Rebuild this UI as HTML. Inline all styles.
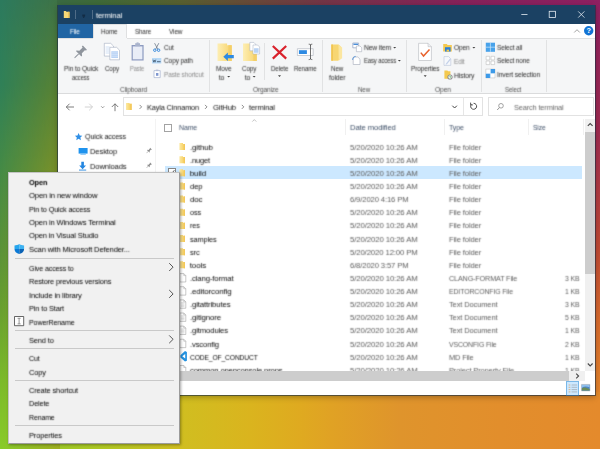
<!DOCTYPE html>
<html><head><meta charset="utf-8"><title>terminal</title>
<style>
*{box-sizing:border-box;margin:0;padding:0}
html,body{width:600px;height:449px;overflow:hidden}
body{font-family:"Liberation Sans",sans-serif;font-size:7.1px;color:#2b2b2b;position:relative;
background:#c9b921;
}
.a,.t,svg.ov{position:absolute}
.t{white-space:nowrap;line-height:10px;height:10px}
svg.ov{left:0;top:0;width:600px;height:449px;overflow:visible}
#win{position:absolute;left:58px;top:5px;width:537px;height:390px;background:#fff;box-shadow:0 2px 6px rgba(0,0,0,.30)}
#menu{position:absolute;left:8px;top:172px;width:172px;height:272px;background:#f1f1f1;border:1px solid #c4c4c4;border-right-color:#9c9c9c;border-bottom-color:#9c9c9c;box-shadow:1px 1px 2.5px rgba(0,0,0,.35)}
.ms{position:absolute;left:14.5px;width:159.5px;height:1px;background:#c9c9c9}
#bgB{position:absolute;left:0;top:390px;width:600px;height:59px;background:linear-gradient(to right,#88cc2c 0px,#aec824 100px,#d0be20 180px,#dab41e 250px,#dfaa20 300px,#e0a224 330px,#df942c 400px,#e28e2c 500px,#e48a2c 600px)}
#bgL{position:absolute;left:0;top:0;width:60px;height:449px;background:linear-gradient(to bottom,#3f7346 0px,#5a8232 85px,#7d9228 172px,#a0b020 449px)}
#bgL i{position:absolute;left:0;top:0;width:60px;height:449px;background:linear-gradient(to bottom,#2c7a5e 0px,#2f8058 85px,#448a46 170px,#5a9238 250px,#68a030 310px,#7aba2c 380px,#88cc2c 449px);-webkit-mask-image:linear-gradient(to right,#000 0px,rgba(0,0,0,.85) 9px,transparent 60px);mask-image:linear-gradient(to right,#000 0px,rgba(0,0,0,.85) 9px,transparent 60px)}
#bgT{position:absolute;left:57px;top:0;width:543px;height:8px;background:linear-gradient(to right,#3a6a42 0px,#3f6a38 43px,#586030 123px,#684a38 193px,#743646 263px,#7f2a52 343px,#87225a 403px,#8e2062 543px)}
#bgR{position:absolute;left:594px;top:0;width:6px;height:392px;background:linear-gradient(to bottom,#8e2062 0px,#a02a50 130px,#c04a34 250px,#d86a2c 320px,#e4842c 392px)}
#wt,#mt{will-change:transform;filter:url(#soft);position:absolute;left:0;top:0;width:600px;height:449px}
</style></head><body>
<svg width="0" height="0" style="position:absolute"><filter id="soft" x="0" y="0" width="100%" height="100%" color-interpolation-filters="sRGB"><feConvolveMatrix order="3" kernelMatrix="0.028 0.111 0.028 0.111 0.444 0.111 0.028 0.111 0.028" divisor="1" edgeMode="none" preserveAlpha="false"/></filter></svg>
<div id="bgB"></div><div id="bgL"><i></i></div><div id="bgT"></div><div id="bgR"></div>
<div id="win"></div>
<!-- title bar -->
<div class="a" style="left:58px;top:5px;width:537px;height:19px;background:#1b4163"></div>
<!-- tab row -->
<div class="a" style="left:58px;top:24px;width:35px;height:14px;background:#2165a4"></div>
<div class="a" style="left:93px;top:24px;width:34px;height:15px;background:#f5f6f7;border:1px solid #dfe0e1;border-bottom:none"></div>
<!-- ribbon -->
<div class="a" style="left:58px;top:38px;width:537px;height:56px;background:#f5f6f7;border-bottom:1px solid #dadbdc"></div>
<div class="a" style="left:94px;top:38px;width:32px;height:1px;background:#f5f6f7"></div>
<div class="a" style="left:58px;top:38px;width:35px;height:1px;background:#dfe0e1"></div>
<div class="a" style="left:127px;top:38px;width:468px;height:1px;background:#dfe0e1"></div>
<!-- group separators -->
<div class="a" style="left:209px;top:40px;width:1px;height:52px;background:#e1e2e3"></div>
<div class="a" style="left:322px;top:40px;width:1px;height:52px;background:#e1e2e3"></div>
<div class="a" style="left:406px;top:40px;width:1px;height:52px;background:#e1e2e3"></div>
<div class="a" style="left:481px;top:40px;width:1px;height:52px;background:#e1e2e3"></div>
<div class="a" style="left:546px;top:40px;width:1px;height:52px;background:#e1e2e3"></div>
<div class="a" style="left:264px;top:43px;width:1px;height:37px;background:#e1e2e3"></div>
<!-- address bar -->
<div class="a" style="left:123px;top:97px;width:360px;height:19px;border:1px solid #e2e2e2;background:#fff"></div>
<div class="a" style="left:463px;top:98px;width:1px;height:17px;background:#e6e6e6"></div>
<div class="a" style="left:488px;top:97px;width:106px;height:19px;border:1px solid #e2e2e2;background:#fff"></div>
<!-- column header seps -->
<div class="a" style="left:345px;top:119px;width:1px;height:16px;background:#f0f0f0"></div>
<div class="a" style="left:444px;top:119px;width:1px;height:16px;background:#f0f0f0"></div>
<div class="a" style="left:528px;top:119px;width:1px;height:16px;background:#f0f0f0"></div>
<div class="a" style="left:583px;top:119px;width:1px;height:16px;background:#f0f0f0"></div>
<!-- nav pane separator -->
<div class="a" style="left:155px;top:119px;width:1px;height:252px;background:#f3f3f3"></div>
<!-- selected row -->
<div class="a" style="left:165px;top:166px;width:417px;height:13.4px;background:#cce8ff"></div>
<!-- header checkbox + row checkbox -->
<div class="a" style="left:164px;top:123.5px;width:8px;height:8px;border:1px solid #a3a3a3;background:#fff"></div>
<div class="a" style="left:168px;top:168px;width:8px;height:8px;border:1px solid #858585;background:#fff"></div>
<!-- scrollbars -->
<div class="a" style="left:585px;top:119px;width:10px;height:262px;background:#f0f0f0"></div>
<div class="a" style="left:585px;top:132px;width:10px;height:142px;background:#cdcdcd"></div>
<div class="a" style="left:156px;top:371px;width:429px;height:10px;background:#f0f0f0"></div>
<div class="a" style="left:166px;top:371px;width:403px;height:10px;background:#cdcdcd"></div>
<!-- status bar view buttons -->
<div class="a" style="left:566px;top:381px;width:13px;height:14.5px;background:#cce8ff;border:1px solid #7ab8e8"></div>

<svg class="ov" viewBox="0 0 600 449">
<defs>
 <linearGradient id="fg" x1="0" x2="1" y1="0" y2="0"><stop offset="0" stop-color="#fce9a4"/><stop offset=".55" stop-color="#f9d978"/><stop offset="1" stop-color="#f2c655"/></linearGradient>
 <linearGradient id="fg2" x1="0" x2="1" y1="0" y2="0"><stop offset="0" stop-color="#fdeeb4"/><stop offset="1" stop-color="#f7d36a"/></linearGradient>
 <g id="sfolder"><path d="M0 0.4h3.6l0 .8h2v6.2H0z" fill="url(#fg)"/><path d="M4.4 1.2h1.2v6.2H4.4z" fill="#f3c85a"/></g>
 <g id="sfile"><path d="M0.3 0.3h4l2 2v6.4H0.3z" fill="#fff" stroke="#a2a2a2" stroke-width=".6"/><path d="M4.3.3v2h2" fill="none" stroke="#a2a2a2" stroke-width=".5"/></g>
 <g id="stxt"><path d="M0.3 0.3h4l2 2v6.4H0.3z" fill="#fff" stroke="#a2a2a2" stroke-width=".6"/><path d="M4.3.3v2h2" fill="none" stroke="#a2a2a2" stroke-width=".5"/><path d="M1.4 3.2h3.6M1.4 4.5h3.6M1.4 5.8h3.6M1.4 7.1h3.6" stroke="#bdbdbd" stroke-width=".5"/></g>
 <g id="pin"><path d="M-2.6-6.4h5.2v1.3h-1v4.2l1.9 1.6v.9h-7v-.9l1.9-1.6v-4.2h-1z"/><path d="M-.45 1.6h.9v4.6l-.45 1.2-.45-1.2z"/></g>
 <g id="chev"><path d="M0 0l2 2-2 2" fill="none" stroke="#666" stroke-width=".75"/></g>
 <g id="dd"><path d="M0 0h3l-1.5 1.7z" fill="#444"/></g>
</defs>

<!-- title bar -->
<path d="M63.8 10.9h2.1l.5.8h3.1v6.3h-5.7z" fill="#f7d877"/><path d="M68.2 11.7h1.3v6.3h-1.3z" fill="#eabf52"/>
<path d="M75.5 10v9M92.5 10v9" stroke="#5d7791" stroke-width=".8"/>
<path d="M82.3 15.2h2.8" stroke="#0c1c2e" stroke-width=".8"/><path d="M82.3 16.4h2.8l-1.4 1.4z" fill="#0c1c2e"/>
<g stroke="#e6edf4" stroke-width=".8" fill="none"><path d="M521.3 14.5h6.2"/><rect x="549.2" y="11.3" width="6.2" height="6.2"/><path d="M578.2 11.4l6.2 6.2M584.4 11.4l-6.2 6.2"/></g>
<!-- tab row right -->
<path d="M574.2 32.5l2.8-2.8 2.8 2.8" stroke="#8c8c8c" stroke-width=".8" fill="none"/>
<circle cx="588.7" cy="30.8" r="4.7" fill="#1173d4"/>
<text x="588.7" y="33.4" font-size="7.4" font-weight="bold" fill="#fff" text-anchor="middle" font-family="Liberation Sans">?</text>

<!-- RIBBON: pin -->
<g transform="translate(79.9 52.6) rotate(45)" fill="#8f959d"><use href="#pin" transform="scale(1.1)"/></g>
<!-- copy -->
<g stroke="#a3adc0" stroke-width=".6" fill="#fff">
 <path d="M104.3 43.3h6.4l2.8 2.8v10h-9.2z"/><path d="M109.8 47.3h6.8l2.9 2.9v9.6h-9.7z"/></g>
<path d="M105.6 47h4M105.6 49h4M105.6 51h4M105.6 53h4" stroke="#c4d8f3" stroke-width=".8"/>
<path d="M111.3 51.2h6.7v6.8h-6.7z" fill="#b9d3f5"/><path d="M111.3 52.9h6.7M111.3 54.6h6.7M111.3 56.3h6.7" stroke="#e5effc" stroke-width=".5"/>
<!-- paste -->
<path d="M131.6 45h12v15.5h-12z" fill="#8d9bc0"/><path d="M132.8 46.4h9.6v12.9h-9.6z" fill="#e9edf7"/>
<path d="M135.2 43.2h4.8v3h-4.8z" fill="#a9b3cc"/><path d="M136.6 42.4h2v1.4h-2z" fill="#a9b3cc"/>
<!-- cut -->
<path d="M154.6 43.2l3.3 6.2M158.8 43.2l-3.3 6.2" stroke="#6d7b8c" stroke-width=".8" fill="none"/>
<circle cx="154.8" cy="50.2" r="1.25" fill="none" stroke="#2b82d9" stroke-width=".9"/><circle cx="158.6" cy="50.2" r="1.25" fill="none" stroke="#2b82d9" stroke-width=".9"/>
<!-- copy path -->
<path d="M152 58h9.3v5.5H152z" fill="#b8d9f6"/><path d="M153 59.6l.7 2.6.7-2 .7 2 .7-2.6" stroke="#25384f" stroke-width=".55" fill="none"/><path d="M157 61.7h3.6" stroke="#25384f" stroke-width=".7"/>
<!-- paste shortcut -->
<path d="M154 70.6h6.2v7H154z" fill="#fff" stroke="#a5b2d0" stroke-width=".7"/><path d="M155.8 69.6h2.6v1.5h-2.6z" fill="#b7c1d9"/><path d="M156 73h2.4v2.8H156z" fill="#7f97d0"/>
<!-- move to -->
<path d="M217.5 43.6h9.6v1.6h4.6V61h-14.2z" fill="url(#fg2)"/><path d="M228.4 45.2h3.3V61h-3.3z" fill="#f4cf68"/>
<path d="M223.3 56.7l4.6-4.3v2.7h5.9v3.2h-5.9V61z" fill="#2d8ae2"/>
<!-- copy to -->
<path d="M243 43.6h9.6v1.6h4.1V61H243z" fill="url(#fg2)"/><path d="M253.4 45.2h3.3V61h-3.3z" fill="#f4cf68"/>
<g stroke="#a3adc0" stroke-width=".5" fill="#fff"><path d="M249.8 42.4h4l1.8 1.8v6.6h-5.8z"/><path d="M253 45h4.6l2 2v7H253z"/></g>
<path d="M254 48.2h4.6v4.6H254z" fill="#b9d3f5"/>
<!-- delete -->
<path d="M272.8 46l13.4 12.6M286.2 46l-13.4 12.6" stroke="#d9222c" stroke-width="2.2" fill="none"/>
<!-- rename -->
<path d="M297.4 48.7h15.8v6.8h-15.8z" fill="#fff" stroke="#a9b0ba" stroke-width=".6"/><path d="M298.9 50.2h8v3.8h-8z" fill="#2d8ae2"/>
<path d="M310.5 44.6v14.6M308.7 44.2c1 0 1.8.3 1.8 1 0-.7.8-1 1.8-1M308.7 59.6c1 0 1.8-.3 1.8-1 0 .7.8 1 1.8 1" stroke="#4a4a4a" stroke-width=".8" fill="none"/>
<!-- new folder -->
<path d="M331.3 44.4h7.2l2.2 2v12l-2.6 2.3h-6.8z" fill="#f7d672"/><path d="M338.5 44.4l3.6 3.2v10.6l-3.4 2.5z" fill="#fbe6a0"/><path d="M331.3 44.4h1.6v16.3h-1.6z" fill="#f0c350"/>
<!-- new item -->
<path d="M352.8 43h5.8v4.8h-5.8z" fill="#fff" stroke="#7f94b8" stroke-width=".6"/><path d="M353.4 43.6h4.6v1.4h-4.6z" fill="#4d8fd8"/>
<path d="M356.4 46h3.6l1.7 1.7v4h-5.3z" fill="#fff" stroke="#a3a9b8" stroke-width=".55"/>
<!-- easy access -->
<path d="M353.2 57h4.6l2.2 2.2v5.3h-6.8z" fill="#fff" stroke="#a3a9b8" stroke-width=".6"/><path d="M352.6 59.8c.2-1.8 1.2-3 3-3.4" stroke="#3c87d8" stroke-width=".9" fill="none"/>
<!-- properties -->
<path d="M418.6 43.3h9.4l3.4 3.4v13.8h-12.8z" fill="#fff" stroke="#b4b7bc" stroke-width=".6"/><path d="M428 43.3v3.4h3.4" fill="#eceef1" stroke="#b4b7bc" stroke-width=".5"/>
<path d="M420.8 52.6l2.7 3.4 6-6.6" stroke="#e8622d" stroke-width="1.5" fill="none"/>
<!-- open -->
<path d="M443.2 44h3.6l.8 1h4.2v6.6h-8.6z" fill="#f4c94f"/><path d="M445 47.2h5.6v4.4H445z" fill="#2c7fd6"/><path d="M446.6 49.6h2.4v2h-2.4z" fill="#f4c94f"/>
<!-- edit -->
<path d="M444 56.6h4.6l2.2 2.2v6.6H444z" fill="#f6f8fb" stroke="#b9c4d8" stroke-width=".6"/><path d="M446 63.4l4-5 1 .8-4 5-1.4.5z" fill="#c4d2ea"/>
<!-- history -->
<path d="M444.4 70.4h3l.7.9h2.3v7.4h-6z" fill="#f4c94f"/><circle cx="450" cy="77" r="2.6" fill="#8c8c8c"/><circle cx="450" cy="77" r="1.7" fill="#eef7ee"/><path d="M450 75.8v1.3h1" stroke="#2c9a3c" stroke-width=".55" fill="none"/>
<!-- select all -->
<path d="M485.8 42.7h9.2v9.1h-9.2z" fill="#48a2ea"/><path d="M490.4 42.7v9.1M485.8 47.2h9.2" stroke="#cfe7fb" stroke-width=".7"/>
<!-- select none -->
<g fill="#fff" stroke="#b9b9b9" stroke-width=".55"><path d="M486.1 56.3h3.6v3.6h-3.6zM491 56.3h3.6v3.6H491zM486.1 61h3.6v3.6h-3.6zM491 61h3.6v3.6H491z"/></g>
<!-- invert selection -->
<path d="M485.8 69.1h9.2v8.8h-9.2z" fill="#fff" stroke="#b9b9b9" stroke-width=".5"/><path d="M490.4 69.1h4.6v4.4h-4.6zM485.8 73.5h4.6v4.4h-4.6z" fill="#3d9ae8"/><path d="M490.4 69.1v8.8M485.8 73.5h9.2" stroke="#d6e9fa" stroke-width=".6"/>
<!-- drop-down arrows in ribbon -->
<use href="#dd" x="227.2" y="75.9"/><use href="#dd" x="252.6" y="75.9"/><use href="#dd" x="278" y="75.3"/><use href="#dd" x="423.7" y="75.3"/>
<use href="#dd" x="393.2" y="46.9"/><use href="#dd" x="397.9" y="59.9"/><use href="#dd" x="472.4" y="46.9"/>

<!-- ADDRESS BAR -->
<g stroke="#5e5e5e" stroke-width=".8" fill="none"><path d="M66.3 107h7.7M69.6 103.7l-3.3 3.3 3.3 3.3"/><path d="M115 103.8v7.4M111.8 107l3.2-3.2 3.2 3.2"/></g>
<g stroke="#c6c6c6" stroke-width=".8" fill="none"><path d="M84.8 107h7.7M89.2 103.7l3.3 3.3-3.3 3.3"/></g>
<path d="M101.2 106.3l1.5 1.5 1.5-1.5" stroke="#6a6a6a" stroke-width=".7" fill="none"/>
<use href="#sfolder" x="126" y="102.6"/>
<use href="#chev" x="139.6" y="104.9"/><use href="#chev" x="205" y="104.9"/><use href="#chev" x="241.8" y="104.9"/>
<path d="M452.3 105.7l2.3 2.3 2.3-2.3" stroke="#444" stroke-width="1" fill="none"/>
<path d="M471.4 104.3a3 3 0 1 0 2.2-1" stroke="#444" stroke-width=".95" fill="none"/><path d="M470.6 102.6v2.3h2.3" stroke="#444" stroke-width=".9" fill="none"/>
<circle cx="501" cy="105.8" r="2.3" stroke="#7d7d7d" stroke-width=".7" fill="none"/><path d="M499.4 107.6l-2.2 2.4" stroke="#7d7d7d" stroke-width=".8"/>
<!-- sort arrow -->
<path d="M252.3 121.6l2-2 2 2" stroke="#9a9a9a" stroke-width=".6" fill="none"/>

<!-- NAV PANE -->
<path d="M78.6 133l1.1 2.4 2.6.33-1.9 1.8.5 2.6-2.3-1.28-2.3 1.28.5-2.6-1.9-1.8 2.6-.33z" fill="#2f8fe6"/>
<path d="M78.6 148h9v5.6h-9z" fill="#1f93ee"/><path d="M80.4 154.2h5.4v.7h-5.4z" fill="#6db7f2"/>
<path d="M81.3 161.8h2.6v3.8h2.1l-3.4 3.6-3.4-3.6h2.1z" fill="#2386e0"/><path d="M79 169.6h7.2v.9H79z" fill="#2386e0"/>
<g fill="#8e8e8e"><g transform="translate(148.8 150.8) rotate(45) scale(.48)"><use href="#pin"/></g><g transform="translate(148.8 165.6) rotate(45) scale(.48)"><use href="#pin"/></g></g>
<!-- selected row check -->
<path d="M169.8 172l1.6 1.8 3-3.6" stroke="#333" stroke-width=".8" fill="none"/>
<use href="#sfolder" x="179.4" y="142.70"/>
<use href="#sfolder" x="179.4" y="155.83"/>
<use href="#sfolder" x="179.4" y="168.96"/>
<use href="#sfolder" x="179.4" y="182.09"/>
<use href="#sfolder" x="179.4" y="195.22"/>
<use href="#sfolder" x="179.4" y="208.35"/>
<use href="#sfolder" x="179.4" y="221.48"/>
<use href="#sfolder" x="179.4" y="234.61"/>
<use href="#sfolder" x="179.4" y="247.74"/>
<use href="#sfolder" x="179.4" y="260.87"/>
<use href="#sfile" x="179.5" y="273.30"/>
<use href="#sfile" x="179.5" y="286.43"/>
<use href="#stxt" x="179.5" y="299.56"/>
<use href="#stxt" x="179.5" y="312.69"/>
<use href="#stxt" x="179.5" y="325.82"/>
<use href="#sfile" x="179.5" y="338.95"/>
<path d="M186.9 351.88v8.8l-1.9.9-4.6-4.2v-2.2l4.6-4.2zM185.2 354.08l-2.9 2.2 2.9 2.2z" fill="#2492e0" fill-rule="evenodd"/>
<use href="#sfile" x="179.5" y="365.21"/>
<!-- scrollbar arrows -->
<g stroke="#4a4a4a" stroke-width="1.1" fill="none"><path d="M587.8 125.9l2.4-2.4 2.4 2.4"/><path d="M587.8 363.5l2.4 2.4 2.4-2.4"/></g>
</svg>

<div id="wt">
<div class="t" style="left:95.80px;top:10.90px;font-size:8.0px;transform:scaleX(0.961);transform-origin:0 50%;color:#fff;letter-spacing:-0.150px;">terminal</div>
<div class="t" style="left:70.30px;top:26.90px;font-size:7.0px;transform:scaleX(0.917);transform-origin:0 50%;color:#fff;letter-spacing:-0.150px;">File</div>
<div class="t" style="left:101.00px;top:26.90px;font-size:7.0px;transform:scaleX(0.912);transform-origin:0 50%;letter-spacing:-0.150px;">Home</div>
<div class="t" style="left:135.30px;top:26.90px;font-size:7.0px;transform:scaleX(0.892);transform-origin:0 50%;letter-spacing:-0.150px;">Share</div>
<div class="t" style="left:168.60px;top:26.90px;font-size:7.0px;transform:scaleX(0.928);transform-origin:0 50%;letter-spacing:-0.150px;">View</div>
<div class="t" style="left:63.70px;top:64.00px;font-size:7.0px;transform:scaleX(0.954);transform-origin:0 50%;color:#2a2a2a;letter-spacing:-0.150px;">Pin to Quick</div>
<div class="t" style="left:71.70px;top:72.70px;font-size:7.0px;transform:scaleX(0.828);transform-origin:0 50%;color:#2a2a2a;letter-spacing:-0.150px;">access</div>
<div class="t" style="left:104.70px;top:64.00px;font-size:7.0px;transform:scaleX(0.889);transform-origin:0 50%;color:#2a2a2a;letter-spacing:-0.150px;">Copy</div>
<div class="t" style="left:130.00px;top:64.00px;font-size:7.0px;transform:scaleX(0.816);transform-origin:0 50%;color:#8a8a8a;letter-spacing:-0.150px;">Paste</div>
<div class="t" style="left:163.70px;top:43.40px;font-size:7.0px;transform:scaleX(0.918);transform-origin:0 50%;color:#2a2a2a;letter-spacing:-0.150px;">Cut</div>
<div class="t" style="left:163.70px;top:56.40px;font-size:7.0px;transform:scaleX(0.942);transform-origin:0 50%;color:#2a2a2a;letter-spacing:-0.150px;">Copy path</div>
<div class="t" style="left:163.70px;top:69.50px;font-size:7.0px;transform:scaleX(0.928);transform-origin:0 50%;color:#8a8a8a;letter-spacing:-0.150px;">Paste shortcut</div>
<div class="t" style="left:120.00px;top:84.70px;font-size:7.0px;transform:scaleX(0.943);transform-origin:0 50%;color:#505050;letter-spacing:-0.150px;">Clipboard</div>
<div class="t" style="left:216.20px;top:64.00px;font-size:7.0px;transform:scaleX(0.938);transform-origin:0 50%;color:#2a2a2a;letter-spacing:-0.150px;">Move</div>
<div class="t" style="left:218.80px;top:72.50px;font-size:7.0px;color:#2a2a2a;letter-spacing:-0.122px;">to</div>
<div class="t" style="left:242.00px;top:64.00px;font-size:7.0px;transform:scaleX(0.908);transform-origin:0 50%;color:#2a2a2a;letter-spacing:-0.150px;">Copy</div>
<div class="t" style="left:244.70px;top:72.50px;font-size:7.0px;color:#2a2a2a;letter-spacing:-0.122px;">to</div>
<div class="t" style="left:270.80px;top:64.00px;font-size:7.0px;transform:scaleX(0.890);transform-origin:0 50%;color:#2a2a2a;letter-spacing:-0.150px;">Delete</div>
<div class="t" style="left:294.20px;top:64.00px;font-size:7.0px;transform:scaleX(0.880);transform-origin:0 50%;color:#2a2a2a;letter-spacing:-0.150px;">Rename</div>
<div class="t" style="left:252.50px;top:84.70px;font-size:7.0px;transform:scaleX(0.937);transform-origin:0 50%;color:#505050;letter-spacing:-0.150px;">Organize</div>
<div class="t" style="left:331.20px;top:64.00px;font-size:7.0px;transform:scaleX(0.892);transform-origin:0 50%;color:#2a2a2a;letter-spacing:-0.150px;">New</div>
<div class="t" style="left:329.20px;top:72.50px;font-size:7.0px;transform:scaleX(0.981);transform-origin:0 50%;color:#2a2a2a;letter-spacing:-0.150px;">folder</div>
<div class="t" style="left:363.80px;top:43.40px;font-size:7.0px;transform:scaleX(0.965);transform-origin:0 50%;color:#2a2a2a;letter-spacing:-0.150px;">New item</div>
<div class="t" style="left:363.80px;top:56.40px;font-size:7.0px;transform:scaleX(0.850);transform-origin:0 50%;color:#2a2a2a;letter-spacing:-0.150px;">Easy access</div>
<div class="t" style="left:358.00px;top:84.70px;font-size:7.0px;transform:scaleX(0.885);transform-origin:0 50%;color:#505050;letter-spacing:-0.150px;">New</div>
<div class="t" style="left:410.80px;top:64.00px;font-size:7.0px;transform:scaleX(0.934);transform-origin:0 50%;color:#2a2a2a;letter-spacing:-0.150px;">Properties</div>
<div class="t" style="left:454.20px;top:43.40px;font-size:7.0px;transform:scaleX(0.938);transform-origin:0 50%;color:#2a2a2a;letter-spacing:-0.150px;">Open</div>
<div class="t" style="left:454.20px;top:56.70px;font-size:7.0px;transform:scaleX(0.916);transform-origin:0 50%;color:#8a8a8a;letter-spacing:-0.150px;">Edit</div>
<div class="t" style="left:454.20px;top:70.50px;font-size:7.0px;transform:scaleX(0.979);transform-origin:0 50%;color:#2a2a2a;letter-spacing:-0.150px;">History</div>
<div class="t" style="left:435.00px;top:84.70px;font-size:7.0px;transform:scaleX(0.956);transform-origin:0 50%;color:#505050;letter-spacing:-0.150px;">Open</div>
<div class="t" style="left:497.00px;top:43.40px;font-size:7.0px;transform:scaleX(0.937);transform-origin:0 50%;color:#2a2a2a;letter-spacing:-0.150px;">Select all</div>
<div class="t" style="left:497.00px;top:56.40px;font-size:7.0px;transform:scaleX(0.925);transform-origin:0 50%;color:#2a2a2a;letter-spacing:-0.150px;">Select none</div>
<div class="t" style="left:497.00px;top:69.50px;font-size:7.0px;transform:scaleX(0.962);transform-origin:0 50%;color:#2a2a2a;letter-spacing:-0.150px;">Invert selection</div>
<div class="t" style="left:504.70px;top:84.70px;font-size:7.0px;transform:scaleX(0.867);transform-origin:0 50%;color:#505050;letter-spacing:-0.150px;">Select</div>
<div class="t" style="left:147.20px;top:102.50px;font-size:8.0px;transform:scaleX(0.919);transform-origin:0 50%;color:#111;letter-spacing:-0.150px;">Kayla Cinnamon</div>
<div class="t" style="left:212.50px;top:102.50px;font-size:8.0px;transform:scaleX(0.958);transform-origin:0 50%;color:#111;letter-spacing:-0.150px;">GitHub</div>
<div class="t" style="left:249.30px;top:102.50px;font-size:8.0px;transform:scaleX(0.950);transform-origin:0 50%;color:#111;letter-spacing:-0.150px;">terminal</div>
<div class="t" style="left:513.60px;top:102.50px;font-size:8.0px;transform:scaleX(0.922);transform-origin:0 50%;color:#666;letter-spacing:-0.150px;">Search terminal</div>
<div class="t" style="left:179.20px;top:123.20px;font-size:8.0px;transform:scaleX(0.873);transform-origin:0 50%;color:#3f5068;letter-spacing:-0.150px;">Name</div>
<div class="t" style="left:350.00px;top:123.20px;font-size:8.0px;transform:scaleX(0.964);transform-origin:0 50%;color:#3f5068;letter-spacing:-0.150px;">Date modified</div>
<div class="t" style="left:449.30px;top:123.20px;font-size:8.0px;transform:scaleX(0.878);transform-origin:0 50%;color:#3f5068;letter-spacing:-0.150px;">Type</div>
<div class="t" style="left:532.50px;top:123.20px;font-size:8.0px;transform:scaleX(0.835);transform-origin:0 50%;color:#3f5068;letter-spacing:-0.150px;">Size</div>
<div class="t" style="left:85.00px;top:132.40px;font-size:8.0px;transform:scaleX(0.896);transform-origin:0 50%;color:#111;letter-spacing:-0.150px;">Quick access</div>
<div class="t" style="left:90.00px;top:147.00px;font-size:8.0px;transform:scaleX(0.954);transform-origin:0 50%;color:#111;letter-spacing:-0.150px;">Desktop</div>
<div class="t" style="left:90.00px;top:161.70px;font-size:8.0px;transform:scaleX(0.955);transform-origin:0 50%;color:#111;letter-spacing:-0.150px;">Downloads</div>
<div class="t" style="left:189.70px;top:142.60px;font-size:8.0px;transform:scaleX(0.992);transform-origin:0 50%;color:#0a0a0a;letter-spacing:-0.150px;">.github</div>
<div class="t" style="left:349.50px;top:142.60px;font-size:8.0px;transform:scaleX(0.982);transform-origin:0 50%;color:#5e5e5e;letter-spacing:-0.150px;">5/20/2020 10:26 AM</div>
<div class="t" style="left:449.00px;top:142.60px;font-size:8.0px;transform:scaleX(0.959);transform-origin:0 50%;color:#5e5e5e;letter-spacing:-0.150px;">File folder</div>
<div class="t" style="left:189.70px;top:155.73px;font-size:8.0px;transform:scaleX(0.937);transform-origin:0 50%;color:#0a0a0a;letter-spacing:-0.150px;">.nuget</div>
<div class="t" style="left:349.50px;top:155.73px;font-size:8.0px;transform:scaleX(0.982);transform-origin:0 50%;color:#5e5e5e;letter-spacing:-0.150px;">5/20/2020 10:26 AM</div>
<div class="t" style="left:449.00px;top:155.73px;font-size:8.0px;transform:scaleX(0.959);transform-origin:0 50%;color:#5e5e5e;letter-spacing:-0.150px;">File folder</div>
<div class="t" style="left:189.70px;top:168.86px;font-size:8.0px;color:#0a0a0a;letter-spacing:-0.101px;">build</div>
<div class="t" style="left:349.50px;top:168.86px;font-size:8.0px;transform:scaleX(0.982);transform-origin:0 50%;color:#5e5e5e;letter-spacing:-0.150px;">5/20/2020 10:26 AM</div>
<div class="t" style="left:449.00px;top:168.86px;font-size:8.0px;transform:scaleX(0.959);transform-origin:0 50%;color:#5e5e5e;letter-spacing:-0.150px;">File folder</div>
<div class="t" style="left:189.70px;top:181.99px;font-size:8.0px;transform:scaleX(0.961);transform-origin:0 50%;color:#0a0a0a;letter-spacing:-0.150px;">dep</div>
<div class="t" style="left:349.50px;top:181.99px;font-size:8.0px;transform:scaleX(0.982);transform-origin:0 50%;color:#5e5e5e;letter-spacing:-0.150px;">5/20/2020 10:26 AM</div>
<div class="t" style="left:449.00px;top:181.99px;font-size:8.0px;transform:scaleX(0.959);transform-origin:0 50%;color:#5e5e5e;letter-spacing:-0.150px;">File folder</div>
<div class="t" style="left:189.70px;top:195.12px;font-size:8.0px;transform:scaleX(0.995);transform-origin:0 50%;color:#0a0a0a;letter-spacing:-0.150px;">doc</div>
<div class="t" style="left:349.50px;top:195.12px;font-size:8.0px;transform:scaleX(0.961);transform-origin:0 50%;color:#5e5e5e;letter-spacing:-0.150px;">6/9/2020 4:16 PM</div>
<div class="t" style="left:449.00px;top:195.12px;font-size:8.0px;transform:scaleX(0.959);transform-origin:0 50%;color:#5e5e5e;letter-spacing:-0.150px;">File folder</div>
<div class="t" style="left:189.70px;top:208.25px;font-size:8.0px;transform:scaleX(0.916);transform-origin:0 50%;color:#0a0a0a;letter-spacing:-0.150px;">oss</div>
<div class="t" style="left:349.50px;top:208.25px;font-size:8.0px;transform:scaleX(0.982);transform-origin:0 50%;color:#5e5e5e;letter-spacing:-0.150px;">5/20/2020 10:26 AM</div>
<div class="t" style="left:449.00px;top:208.25px;font-size:8.0px;transform:scaleX(0.959);transform-origin:0 50%;color:#5e5e5e;letter-spacing:-0.150px;">File folder</div>
<div class="t" style="left:189.70px;top:221.38px;font-size:8.0px;transform:scaleX(0.909);transform-origin:0 50%;color:#0a0a0a;letter-spacing:-0.150px;">res</div>
<div class="t" style="left:349.50px;top:221.38px;font-size:8.0px;transform:scaleX(0.982);transform-origin:0 50%;color:#5e5e5e;letter-spacing:-0.150px;">5/20/2020 10:26 AM</div>
<div class="t" style="left:449.00px;top:221.38px;font-size:8.0px;transform:scaleX(0.959);transform-origin:0 50%;color:#5e5e5e;letter-spacing:-0.150px;">File folder</div>
<div class="t" style="left:189.70px;top:234.51px;font-size:8.0px;transform:scaleX(0.922);transform-origin:0 50%;color:#0a0a0a;letter-spacing:-0.150px;">samples</div>
<div class="t" style="left:349.50px;top:234.51px;font-size:8.0px;transform:scaleX(0.982);transform-origin:0 50%;color:#5e5e5e;letter-spacing:-0.150px;">5/20/2020 10:26 AM</div>
<div class="t" style="left:449.00px;top:234.51px;font-size:8.0px;transform:scaleX(0.959);transform-origin:0 50%;color:#5e5e5e;letter-spacing:-0.150px;">File folder</div>
<div class="t" style="left:189.70px;top:247.64px;font-size:8.0px;transform:scaleX(0.939);transform-origin:0 50%;color:#0a0a0a;letter-spacing:-0.150px;">src</div>
<div class="t" style="left:349.50px;top:247.64px;font-size:8.0px;transform:scaleX(0.976);transform-origin:0 50%;color:#5e5e5e;letter-spacing:-0.150px;">5/20/2020 12:00 PM</div>
<div class="t" style="left:449.00px;top:247.64px;font-size:8.0px;transform:scaleX(0.959);transform-origin:0 50%;color:#5e5e5e;letter-spacing:-0.150px;">File folder</div>
<div class="t" style="left:189.70px;top:260.77px;font-size:8.0px;color:#0a0a0a;letter-spacing:-0.101px;">tools</div>
<div class="t" style="left:349.50px;top:260.77px;font-size:8.0px;transform:scaleX(0.961);transform-origin:0 50%;color:#5e5e5e;letter-spacing:-0.150px;">6/8/2020 3:57 PM</div>
<div class="t" style="left:449.00px;top:260.77px;font-size:8.0px;transform:scaleX(0.959);transform-origin:0 50%;color:#5e5e5e;letter-spacing:-0.150px;">File folder</div>
<div class="t" style="left:189.70px;top:273.90px;font-size:8.0px;transform:scaleX(0.972);transform-origin:0 50%;color:#0a0a0a;letter-spacing:-0.150px;">.clang-format</div>
<div class="t" style="left:349.50px;top:273.90px;font-size:8.0px;transform:scaleX(0.982);transform-origin:0 50%;color:#5e5e5e;letter-spacing:-0.150px;">5/20/2020 10:26 AM</div>
<div class="t" style="left:449.00px;top:273.90px;font-size:8.0px;transform:scaleX(0.899);transform-origin:0 50%;color:#5e5e5e;letter-spacing:-0.150px;">CLANG-FORMAT File</div>
<div class="t" style="left:565.20px;top:273.90px;font-size:8.0px;transform:scaleX(0.860);transform-origin:0 50%;color:#5e5e5e;letter-spacing:-0.150px;">3 KB</div>
<div class="t" style="left:189.70px;top:287.03px;font-size:8.0px;transform:scaleX(0.997);transform-origin:0 50%;color:#0a0a0a;letter-spacing:-0.150px;">.editorconfig</div>
<div class="t" style="left:349.50px;top:287.03px;font-size:8.0px;transform:scaleX(0.982);transform-origin:0 50%;color:#5e5e5e;letter-spacing:-0.150px;">5/20/2020 10:26 AM</div>
<div class="t" style="left:449.00px;top:287.03px;font-size:8.0px;transform:scaleX(0.866);transform-origin:0 50%;color:#5e5e5e;letter-spacing:-0.150px;">EDITORCONFIG File</div>
<div class="t" style="left:565.20px;top:287.03px;font-size:8.0px;transform:scaleX(0.860);transform-origin:0 50%;color:#5e5e5e;letter-spacing:-0.150px;">1 KB</div>
<div class="t" style="left:189.70px;top:300.16px;font-size:8.0px;transform:scaleX(0.976);transform-origin:0 50%;color:#0a0a0a;letter-spacing:-0.150px;">.gitattributes</div>
<div class="t" style="left:349.50px;top:300.16px;font-size:8.0px;transform:scaleX(0.982);transform-origin:0 50%;color:#5e5e5e;letter-spacing:-0.150px;">5/20/2020 10:26 AM</div>
<div class="t" style="left:449.00px;top:300.16px;font-size:8.0px;transform:scaleX(0.941);transform-origin:0 50%;color:#5e5e5e;letter-spacing:-0.150px;">Text Document</div>
<div class="t" style="left:565.20px;top:300.16px;font-size:8.0px;transform:scaleX(0.860);transform-origin:0 50%;color:#5e5e5e;letter-spacing:-0.150px;">3 KB</div>
<div class="t" style="left:189.70px;top:313.29px;font-size:8.0px;transform:scaleX(0.987);transform-origin:0 50%;color:#0a0a0a;letter-spacing:-0.150px;">.gitignore</div>
<div class="t" style="left:349.50px;top:313.29px;font-size:8.0px;transform:scaleX(0.982);transform-origin:0 50%;color:#5e5e5e;letter-spacing:-0.150px;">5/20/2020 10:26 AM</div>
<div class="t" style="left:449.00px;top:313.29px;font-size:8.0px;transform:scaleX(0.941);transform-origin:0 50%;color:#5e5e5e;letter-spacing:-0.150px;">Text Document</div>
<div class="t" style="left:565.20px;top:313.29px;font-size:8.0px;transform:scaleX(0.860);transform-origin:0 50%;color:#5e5e5e;letter-spacing:-0.150px;">5 KB</div>
<div class="t" style="left:189.70px;top:326.42px;font-size:8.0px;transform:scaleX(0.968);transform-origin:0 50%;color:#0a0a0a;letter-spacing:-0.150px;">.gitmodules</div>
<div class="t" style="left:349.50px;top:326.42px;font-size:8.0px;transform:scaleX(0.982);transform-origin:0 50%;color:#5e5e5e;letter-spacing:-0.150px;">5/20/2020 10:26 AM</div>
<div class="t" style="left:449.00px;top:326.42px;font-size:8.0px;transform:scaleX(0.941);transform-origin:0 50%;color:#5e5e5e;letter-spacing:-0.150px;">Text Document</div>
<div class="t" style="left:565.20px;top:326.42px;font-size:8.0px;transform:scaleX(0.860);transform-origin:0 50%;color:#5e5e5e;letter-spacing:-0.150px;">1 KB</div>
<div class="t" style="left:189.70px;top:339.55px;font-size:8.0px;transform:scaleX(0.959);transform-origin:0 50%;color:#0a0a0a;letter-spacing:-0.150px;">.vsconfig</div>
<div class="t" style="left:349.50px;top:339.55px;font-size:8.0px;transform:scaleX(0.982);transform-origin:0 50%;color:#5e5e5e;letter-spacing:-0.150px;">5/20/2020 10:26 AM</div>
<div class="t" style="left:449.00px;top:339.55px;font-size:8.0px;transform:scaleX(0.866);transform-origin:0 50%;color:#5e5e5e;letter-spacing:-0.150px;">VSCONFIG File</div>
<div class="t" style="left:565.20px;top:339.55px;font-size:8.0px;transform:scaleX(0.860);transform-origin:0 50%;color:#5e5e5e;letter-spacing:-0.150px;">2 KB</div>
<div class="t" style="left:189.70px;top:352.68px;font-size:8.0px;transform:scaleX(0.837);transform-origin:0 50%;color:#0a0a0a;letter-spacing:-0.150px;">CODE_OF_CONDUCT</div>
<div class="t" style="left:349.50px;top:352.68px;font-size:8.0px;transform:scaleX(0.982);transform-origin:0 50%;color:#5e5e5e;letter-spacing:-0.150px;">5/20/2020 10:26 AM</div>
<div class="t" style="left:449.00px;top:352.68px;font-size:8.0px;transform:scaleX(0.928);transform-origin:0 50%;color:#5e5e5e;letter-spacing:-0.150px;">MD File</div>
<div class="t" style="left:565.20px;top:352.68px;font-size:8.0px;transform:scaleX(0.860);transform-origin:0 50%;color:#5e5e5e;letter-spacing:-0.150px;">1 KB</div>
<div class="t" style="left:189.70px;top:365.81px;font-size:8.0px;transform:scaleX(0.954);transform-origin:0 50%;color:#0a0a0a;letter-spacing:-0.150px;">common.openconsole.props</div>
<div class="t" style="left:349.50px;top:365.81px;font-size:8.0px;transform:scaleX(0.982);transform-origin:0 50%;color:#5e5e5e;letter-spacing:-0.150px;">5/20/2020 10:26 AM</div>
<div class="t" style="left:449.00px;top:365.81px;font-size:8.0px;transform:scaleX(0.938);transform-origin:0 50%;color:#5e5e5e;letter-spacing:-0.150px;">Project Property File</div>
<div class="t" style="left:565.20px;top:365.81px;font-size:8.0px;transform:scaleX(0.860);transform-origin:0 50%;color:#5e5e5e;letter-spacing:-0.150px;">1 KB</div>
</div>
<!-- layers above text: h-scrollbar, status bar -->
<div class="a" style="left:156px;top:371px;width:429px;height:10px;background:#f0f0f0"></div>
<div class="a" style="left:166px;top:371px;width:403px;height:10px;background:#cdcdcd"></div>
<div class="a" style="left:585px;top:371px;width:10px;height:10px;background:#fff"></div>
<div class="a" style="left:58px;top:381px;width:537px;height:14px;background:#fff"></div>
<div class="a" style="left:566px;top:381px;width:13px;height:14.5px;background:#cce8ff;border:1px solid #7ab8e8"></div>
<svg class="ov" viewBox="0 0 600 449">
<path d="M576.2 373.6l2.4 2.4-2.4 2.4" stroke="#4a4a4a" stroke-width="1.1" fill="none"/>
<g stroke="#8a8a8a" stroke-width=".5"><path d="M571.6 385h5.6M571.6 387.3h5.6M571.6 389.6h5.6M571.6 391.9h5.6"/></g>
<g stroke="#e0a060" stroke-width=".7"><path d="M568.6 385h1.8M568.6 387.3h1.8M568.6 389.6h1.8M568.6 391.9h1.8"/></g>
<path d="M581.4 384.4h8.6v6.6h-8.6z" fill="#4d86c6" stroke="#c9c9c9" stroke-width=".6"/><path d="M581.8 388.2c2-1.4 4.6-.6 7.8.8v1.6h-7.8z" fill="#6a8c5a"/><path d="M581.8 385h7.8v2.2c-3-.8-5.4-1-7.8.6z" fill="#8fc0ee"/>
</svg>
<div class="a" style="left:57px;top:5px;width:539px;height:391px;border:1px solid rgba(30,48,68,.62);border-top:none"></div>

<div id="menu"></div>
<div class="ms" style="top:258px"></div>
<div class="ms" style="top:330.3px"></div>
<div class="ms" style="top:348.4px"></div>
<div class="ms" style="top:380.2px"></div>
<div class="ms" style="top:425.2px"></div>
<svg class="ov" viewBox="0 0 600 449">
<!-- defender shield -->
<clipPath id="sh"><path d="M19.3 243.9c1.6 1 3 1.4 4.8 1.5v3.6c0 2.6-1.8 4.2-4.8 5.1-3-.9-4.8-2.5-4.8-5.1v-3.6c1.8-.1 3.2-.5 4.8-1.5z"/></clipPath>
<g clip-path="url(#sh)"><path d="M14 243h5.3v5.9H14z" fill="#27a6ee"/><path d="M19.3 243H25v5.9h-5.7z" fill="#3db2f2"/><path d="M14 248.9h5.3v6H14z" fill="#0b7ad6"/><path d="M19.3 248.9H25v6h-5.7z" fill="#0a62b4"/></g>
<!-- power rename -->
<path d="M14.5 316.5h9.2v9.2h-9.2z" fill="#fff" stroke="#404040" stroke-width=".8"/>
<path d="M19.1 318.4v5.4M17.6 318.3h3M17.6 323.9h3" stroke="#6a6a6a" stroke-width=".7" fill="none"/>
<!-- submenu arrows -->
<g stroke="#2e2e2e" stroke-width=".8" fill="none"><path d="M169.2 263.2l3.9 3.9-3.9 3.9"/><path d="M169.2 290l3.9 3.9-3.9 3.9"/><path d="M169.2 335.4l3.9 3.9-3.9 3.9"/></g>
</svg>

<div id="mt">
<div class="t" style="left:29.30px;top:177.70px;font-size:8.0px;transform:scaleX(0.922);transform-origin:0 50%;color:#000;font-weight:bold;letter-spacing:-0.150px;">Open</div>
<div class="t" style="left:29.30px;top:191.10px;font-size:8.0px;transform:scaleX(0.962);transform-origin:0 50%;color:#000;letter-spacing:-0.150px;">Open in new window</div>
<div class="t" style="left:29.30px;top:204.60px;font-size:8.0px;transform:scaleX(0.909);transform-origin:0 50%;color:#000;letter-spacing:-0.150px;">Pin to Quick access</div>
<div class="t" style="left:29.30px;top:218.00px;font-size:8.0px;transform:scaleX(0.948);transform-origin:0 50%;color:#000;letter-spacing:-0.150px;">Open in Windows Terminal</div>
<div class="t" style="left:29.30px;top:231.40px;font-size:8.0px;transform:scaleX(0.941);transform-origin:0 50%;color:#000;letter-spacing:-0.150px;">Open in Visual Studio</div>
<div class="t" style="left:29.30px;top:245.00px;font-size:8.0px;transform:scaleX(0.949);transform-origin:0 50%;color:#000;letter-spacing:-0.150px;">Scan with Microsoft Defender...</div>
<div class="t" style="left:29.30px;top:263.70px;font-size:8.0px;transform:scaleX(0.887);transform-origin:0 50%;color:#000;letter-spacing:-0.150px;">Give access to</div>
<div class="t" style="left:29.30px;top:277.10px;font-size:8.0px;transform:scaleX(0.927);transform-origin:0 50%;color:#000;letter-spacing:-0.150px;">Restore previous versions</div>
<div class="t" style="left:29.30px;top:290.50px;font-size:8.0px;transform:scaleX(0.949);transform-origin:0 50%;color:#000;letter-spacing:-0.150px;">Include in library</div>
<div class="t" style="left:29.30px;top:304.00px;font-size:8.0px;transform:scaleX(0.926);transform-origin:0 50%;color:#000;letter-spacing:-0.150px;">Pin to Start</div>
<div class="t" style="left:29.30px;top:317.50px;font-size:8.0px;transform:scaleX(0.887);transform-origin:0 50%;color:#000;letter-spacing:-0.150px;">PowerRename</div>
<div class="t" style="left:29.30px;top:335.90px;font-size:8.0px;transform:scaleX(0.931);transform-origin:0 50%;color:#000;letter-spacing:-0.150px;">Send to</div>
<div class="t" style="left:29.30px;top:354.10px;font-size:8.0px;transform:scaleX(0.875);transform-origin:0 50%;color:#000;letter-spacing:-0.150px;">Cut</div>
<div class="t" style="left:29.30px;top:367.50px;font-size:8.0px;transform:scaleX(0.940);transform-origin:0 50%;color:#000;letter-spacing:-0.150px;">Copy</div>
<div class="t" style="left:29.30px;top:385.60px;font-size:8.0px;transform:scaleX(0.934);transform-origin:0 50%;color:#000;letter-spacing:-0.150px;">Create shortcut</div>
<div class="t" style="left:29.30px;top:399.20px;font-size:8.0px;transform:scaleX(0.913);transform-origin:0 50%;color:#000;letter-spacing:-0.150px;">Delete</div>
<div class="t" style="left:29.30px;top:412.70px;font-size:8.0px;transform:scaleX(0.872);transform-origin:0 50%;color:#000;letter-spacing:-0.150px;">Rename</div>
<div class="t" style="left:29.30px;top:430.50px;font-size:8.0px;transform:scaleX(0.938);transform-origin:0 50%;color:#000;letter-spacing:-0.150px;">Properties</div>
</div>
</body></html>
